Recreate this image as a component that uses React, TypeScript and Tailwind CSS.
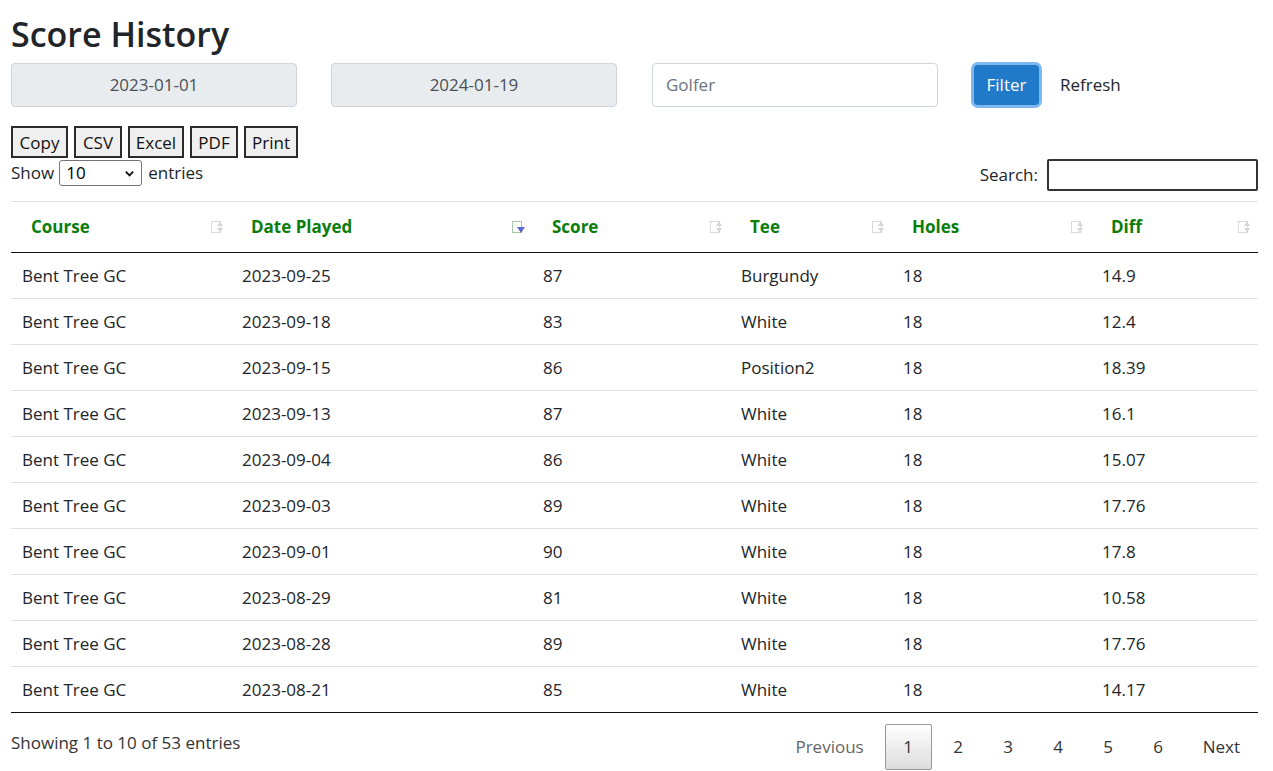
import React from 'react';

const rows = [
  ['Bent Tree GC', '2023-09-25', '87', 'Burgundy', '18', '14.9'],
  ['Bent Tree GC', '2023-09-18', '83', 'White', '18', '12.4'],
  ['Bent Tree GC', '2023-09-15', '86', 'Position2', '18', '18.39'],
  ['Bent Tree GC', '2023-09-13', '87', 'White', '18', '16.1'],
  ['Bent Tree GC', '2023-09-04', '86', 'White', '18', '15.07'],
  ['Bent Tree GC', '2023-09-03', '89', 'White', '18', '17.76'],
  ['Bent Tree GC', '2023-09-01', '90', 'White', '18', '17.8'],
  ['Bent Tree GC', '2023-08-29', '81', 'White', '18', '10.58'],
  ['Bent Tree GC', '2023-08-28', '89', 'White', '18', '17.76'],
  ['Bent Tree GC', '2023-08-21', '85', 'White', '18', '14.17'],
];

const columns = [
  { name: 'Course', width: 220, sort: 'both' },
  { name: 'Date Played', width: 301, sort: 'desc' },
  { name: 'Score', width: 198, sort: 'both' },
  { name: 'Tee', width: 162, sort: 'both' },
  { name: 'Holes', width: 199, sort: 'both' },
  { name: 'Diff', width: 167, sort: 'both' },
];

const exportButtons = [
  { label: 'Copy', w: 'w-[57px]' },
  { label: 'CSV', w: 'w-[48px]' },
  { label: 'Excel', w: 'w-[56px]' },
  { label: 'PDF', w: 'w-[48px]' },
  { label: 'Print', w: 'w-[54px]' },
];

function SortIcon({ kind }: { kind: string }) {
  if (kind === 'desc') {
    return (
      <svg width="15" height="16" viewBox="0 0 15 16" className="shrink-0">
        <rect x="1.5" y="2.5" width="9" height="11" fill="none" stroke="#a9c7a9" strokeWidth="1" />
        <path d="M6 8 L14 8 L10 14 Z" fill="#5b67d2" />
      </svg>
    );
  }
  return (
    <svg width="15" height="16" viewBox="0 0 15 16" className="shrink-0">
      <rect x="1.5" y="2.5" width="9" height="11" fill="none" stroke="#dadada" strokeWidth="1" />
      <path d="M7 7 L10 2.5 L13 7 Z" fill="#d6d6d6" />
      <path d="M7 9 L13 9 L10 13.5 Z" fill="#d6d6d6" />
    </svg>
  );
}

export default function App() {
  return (
    <div
      className="min-h-screen bg-white pl-[11px] pr-[15px] text-[17px] text-[#212529]"
      style={{ fontFamily: '"Open Sans", "Noto Sans", sans-serif' }}
    >
      <h2 className="pt-[14px] text-[34px] font-semibold leading-[41px] text-[#212529]">Score History</h2>

      {/* filter row */}
      <div className="mt-[8px] flex h-[44px] items-center">
        <div className="flex h-[44px] w-[286px] items-center justify-center rounded-[4px] border border-[#ced4da] bg-[#e9ecef] text-[#495057]">
          2023-01-01
        </div>
        <div className="ml-[34px] flex h-[44px] w-[286px] items-center justify-center rounded-[4px] border border-[#ced4da] bg-[#e9ecef] text-[#495057]">
          2024-01-19
        </div>
        <div className="ml-[35px] flex h-[44px] w-[286px] items-center rounded-[4px] border border-[#ced4da] bg-white pl-[13px] text-[#6c757d]">
          Golfer
        </div>
        <button className="ml-[36px] flex h-[40px] w-[65px] items-center justify-center rounded-[4px] bg-[#2179c9] text-white ring-[3px] ring-[#7db8f3]">
          Filter
        </button>
        <span className="ml-[21px] text-[#212529]">Refresh</span>
      </div>

      {/* export buttons */}
      <div className="mt-[19px] flex gap-[6px]">
        {exportButtons.map((b) => (
          <button
            key={b.label}
            className={
              'flex h-[32px] items-center justify-center border-2 border-[#2b2b2b] bg-[#efefef] leading-none text-[#111] ' +
              b.w
            }
          >
            {b.label}
          </button>
        ))}
      </div>

      {/* length + search */}
      <div className="flex h-[43px] items-start justify-between">
        <div className="mt-[2px] flex items-center">
          <span>Show</span>
          <div className="ml-[5px] flex h-[26px] w-[83px] items-center justify-between rounded-[3px] border border-[#767676] bg-white pl-[6px] pr-[6px] text-[#000]">
            <span>10</span>
            <svg width="11" height="11" viewBox="0 0 12 12">
              <path d="M2 4 L6 8 L10 4" fill="none" stroke="#111" strokeWidth="2" />
            </svg>
          </div>
          <span className="ml-[6px]">entries</span>
        </div>
        <div className="mt-[1px] flex items-center">
          <span className="text-[#212529]">Search:</span>
          <div className="ml-[9px] h-[32px] w-[211px] rounded-[2px] border-2 border-[#333] bg-white" />
        </div>
      </div>

      {/* table */}
      <table className="w-full table-fixed border-collapse">
        <colgroup>
          {columns.map((c) => (
            <col key={c.name} style={{ width: c.width }} />
          ))}
        </colgroup>
        <thead>
          <tr className="h-[51px] border-t border-b border-t-[#dee2e6] border-b-[#111]">
            {columns.map((c) => (
              <th key={c.name} className="px-0 text-left align-middle">
                <div className="flex items-center justify-between pl-[20px] pr-[6px] text-[17px] font-bold text-[#0a7d0a]">
                  <span>{c.name}</span>
                  <SortIcon kind={c.sort} />
                </div>
              </th>
            ))}
          </tr>
        </thead>
        <tbody>
          {rows.map((r, i) => (
            <tr
              key={i}
              className={
                'h-[46px] border-b ' + (i === rows.length - 1 ? 'border-b-[#111]' : 'border-b-[#dee2e6]')
              }
            >
              {r.map((v, j) => (
                <td key={j} className="pl-[11px] align-middle text-[#212529]">
                  {v}
                </td>
              ))}
            </tr>
          ))}
        </tbody>
      </table>

      {/* footer */}
      <div className="mt-[11px] flex items-start justify-between">
        <div className="mt-[6px] text-[#333]">Showing 1 to 10 of 53 entries</div>
        <div className="flex items-center">
          <span className="flex h-[46px] items-center pl-[17px] pr-[20px] text-[#666]">Previous</span>
          <span className="ml-[1px] flex h-[46px] w-[47px] items-center justify-center rounded-[2px] border border-[#979797] bg-gradient-to-b from-white to-[#dcdcdc] text-[#333]">
            1
          </span>
          {['2', '3', '4', '5', '6'].map((p) => (
            <span key={p} className="ml-[3px] flex h-[46px] w-[47px] items-center justify-center text-[#333]">
              {p}
            </span>
          ))}
          <span className="ml-[2px] flex h-[46px] items-center pl-[19px] pr-[18px] text-[#333]">Next</span>
        </div>
      </div>
    </div>
  );
}
